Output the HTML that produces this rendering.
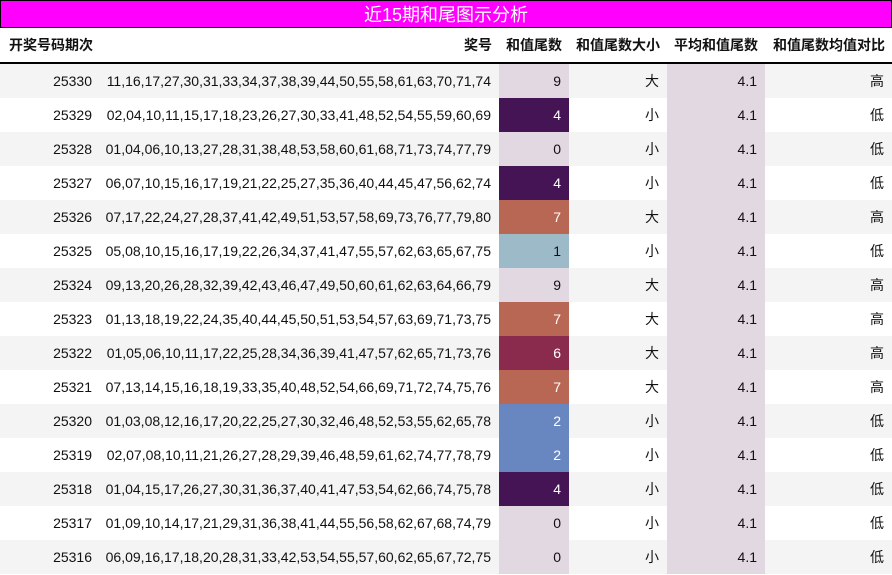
<!DOCTYPE html><html><head><meta charset="utf-8"><style>
body{margin:0;width:892px;height:575px;background:#fff;font-family:"Liberation Sans","Noto Sans CJK SC",sans-serif;font-size:14px;color:#111;overflow:hidden}
.t{position:absolute;left:0;top:0;width:890px;height:26px;background:#ff00ff;border:1px solid #000;color:#fff;text-align:center;font-size:18px;line-height:28px}
table{position:absolute;left:0;top:28px;border-collapse:collapse;width:892px;table-layout:fixed}
th{height:34px;font-weight:bold;text-align:right;padding:0 7px 0 0;border-bottom:2px solid #000;white-space:nowrap}
td{height:34px;padding:0 8px 0 0;text-align:right;white-space:nowrap}
tr:nth-child(odd) td{background:#f4f4f4}
td.a{background:#e2d8e2!important}
.w{color:#fff}
</style></head><body>
<div class="t">近15期和尾图示分析</div>
<table>
<colgroup><col style="width:100px"><col style="width:399px"><col style="width:70px"><col style="width:98px"><col style="width:98px"><col style="width:127px"></colgroup>
<thead><tr><th style="text-align:left;padding-left:9px">开奖号码期次</th><th>奖号</th><th>和值尾数</th><th>和值尾数大小</th><th>平均和值尾数</th><th>和值尾数均值对比</th></tr></thead>
<tbody>
<tr><td>25330</td><td>11,16,17,27,30,31,33,34,37,38,39,44,50,55,58,61,63,70,71,74</td><td class="a">9</td><td>大</td><td class="a">4.1</td><td>高</td></tr>
<tr><td>25329</td><td>02,04,10,11,15,17,18,23,26,27,30,33,41,48,52,54,55,59,60,69</td><td class="w" style="background:#451455">4</td><td>小</td><td class="a">4.1</td><td>低</td></tr>
<tr><td>25328</td><td>01,04,06,10,13,27,28,31,38,48,53,58,60,61,68,71,73,74,77,79</td><td class="a">0</td><td>小</td><td class="a">4.1</td><td>低</td></tr>
<tr><td>25327</td><td>06,07,10,15,16,17,19,21,22,25,27,35,36,40,44,45,47,56,62,74</td><td class="w" style="background:#451455">4</td><td>小</td><td class="a">4.1</td><td>低</td></tr>
<tr><td>25326</td><td>07,17,22,24,27,28,37,41,42,49,51,53,57,58,69,73,76,77,79,80</td><td class="w" style="background:#b86755!important">7</td><td>大</td><td class="a">4.1</td><td>高</td></tr>
<tr><td>25325</td><td>05,08,10,15,16,17,19,22,26,34,37,41,47,55,57,62,63,65,67,75</td><td style="background:#9dbac9">1</td><td>小</td><td class="a">4.1</td><td>低</td></tr>
<tr><td>25324</td><td>09,13,20,26,28,32,39,42,43,46,47,49,50,60,61,62,63,64,66,79</td><td class="a">9</td><td>大</td><td class="a">4.1</td><td>高</td></tr>
<tr><td>25323</td><td>01,13,18,19,22,24,35,40,44,45,50,51,53,54,57,63,69,71,73,75</td><td class="w" style="background:#b86755">7</td><td>大</td><td class="a">4.1</td><td>高</td></tr>
<tr><td>25322</td><td>01,05,06,10,11,17,22,25,28,34,36,39,41,47,57,62,65,71,73,76</td><td class="w" style="background:#8a2a4d!important">6</td><td>大</td><td class="a">4.1</td><td>高</td></tr>
<tr><td>25321</td><td>07,13,14,15,16,18,19,33,35,40,48,52,54,66,69,71,72,74,75,76</td><td class="w" style="background:#b86755">7</td><td>大</td><td class="a">4.1</td><td>高</td></tr>
<tr><td>25320</td><td>01,03,08,12,16,17,20,22,25,27,30,32,46,48,52,53,55,62,65,78</td><td class="w" style="background:#6886bf!important">2</td><td>小</td><td class="a">4.1</td><td>低</td></tr>
<tr><td>25319</td><td>02,07,08,10,11,21,26,27,28,29,39,46,48,59,61,62,74,77,78,79</td><td class="w" style="background:#6886bf">2</td><td>小</td><td class="a">4.1</td><td>低</td></tr>
<tr><td>25318</td><td>01,04,15,17,26,27,30,31,36,37,40,41,47,53,54,62,66,74,75,78</td><td class="w" style="background:#451455!important">4</td><td>小</td><td class="a">4.1</td><td>低</td></tr>
<tr><td>25317</td><td>01,09,10,14,17,21,29,31,36,38,41,44,55,56,58,62,67,68,74,79</td><td class="a">0</td><td>小</td><td class="a">4.1</td><td>低</td></tr>
<tr><td>25316</td><td>06,09,16,17,18,20,28,31,33,42,53,54,55,57,60,62,65,67,72,75</td><td class="a">0</td><td>小</td><td class="a">4.1</td><td>低</td></tr>
</tbody></table>
</body></html>
